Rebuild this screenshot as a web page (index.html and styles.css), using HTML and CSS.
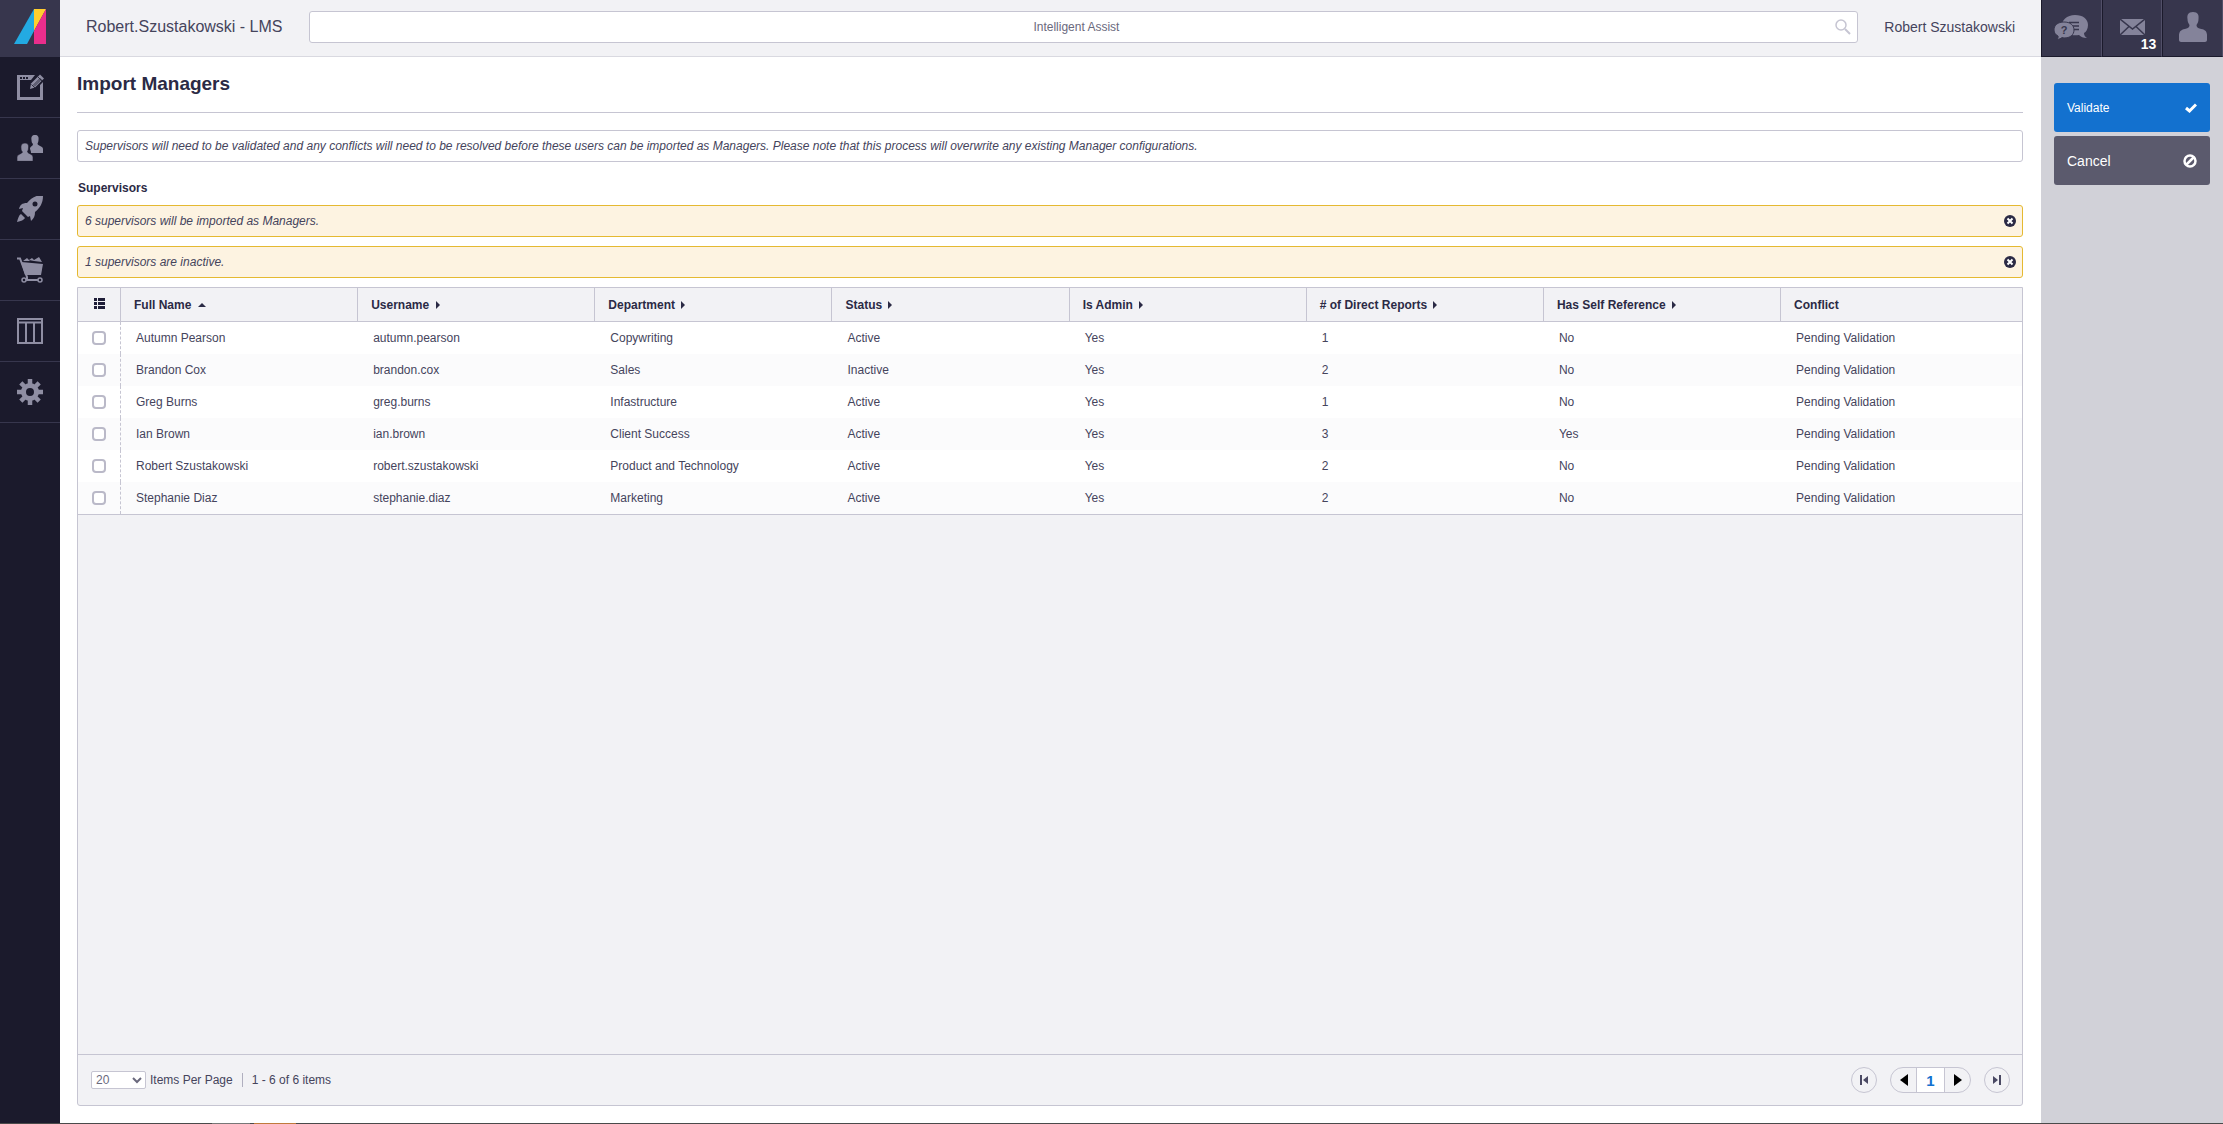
FILE: index.html
```html
<!DOCTYPE html>
<html lang="en">
<head>
    <meta charset="UTF-8">
    <meta name="viewport" content="width=device-width, initial-scale=1.0">
    <title>Import Managers</title>
    <link rel="stylesheet" href="styles.css">
</head>
<body>
    <div class="app">
        <!-- Left menu -->
        <nav class="sidebar" aria-label="Main menu">
            <a class="logo" href="#" aria-label="Home">
                <svg width="32" height="36" viewBox="0 0 32 36">
                    <path fill="#23aae2" d="M0 35L20 0v22l-7 13z"/>
                    <path fill="#ffcf2e" d="M20 0h12L20 22z"/>
                    <path fill="#ea2e8c" d="M32 0v35H20V22z"/>
                </svg>
            </a>
            <a class="menu-item" href="#" aria-label="Content">
                <svg width="28" height="26" viewBox="0 0 28 26">
                    <path fill="currentColor" fill-rule="evenodd" d="M1 1h18l-4 5H4v17h20V11l3-3v18H1zM4 3v2h2V3zM7 3v2h2V3zM10 3v2h2V3z"/>
                    <path fill="currentColor" d="M14 15l1-5.500 9-9 4 4-9 9z"/>
                    <path fill="none" stroke="#1b1a2c" stroke-width=".8" d="M15.500 10.500l3.500 3.500M17 11.500l7.500-7.500M18 12.500l7.500-7.500M22 3l4 4"/>
                </svg>
            </a>
            <a class="menu-item" href="#" aria-label="Users">
                <svg width="26" height="26" viewBox="0 0 26 26">
                    <path fill="currentColor" d="M18 0c3 0 4 2 3.500 5 0 2-1 3-1 4 1 2 5.500 2 5.500 5v4H14c0-3-1-3-1-5 1-2 3-2 3-4-1-1-1.500-2-1.500-4C14 2 15 0 18 0z"/>
                    <path fill="currentColor" stroke="#1b1a2c" stroke-width=".6" d="M8 8c3 0 4 2 3.500 5 0 2-1 3-1 4 1 2 5.500 2 5.500 5v4.300H0V22c0-3 5-3 5.500-5-1-1-1.500-2-1.500-4C3.500 10 5 8 8 8z"/>
                </svg>
            </a>
            <a class="menu-item" href="#" aria-label="Launch">
                <svg width="26" height="26" viewBox="0 0 26 26">
                    <path fill="currentColor" fill-rule="evenodd" d="M26 0c0 7-3 12-8 16 0 4-1 6-4 9l-1-5-2 1-6-6 1-3-4 1c1-4 3-6 8-6 4-5 9-8 16-8zM18 5.500a2.500 2.500 0 1 0 0 5 2.500 2.500 0 0 0 0-5z"/>
                    <path fill="currentColor" d="M4 18l4 4c-1 2-4 3-8 4 1-4 2-7 4-8z"/>
                </svg>
            </a>
            <a class="menu-item" href="#" aria-label="Store">
                <svg width="26" height="26" viewBox="0 0 26 26">
                    <path fill="currentColor" d="M4 5l22 2-2 11H8z"/>
                    <path fill="currentColor" d="M6 4l4-3 3 3zM12 3l3-2 2 2 5-3 3 5-8-1z"/>
                    <path fill="none" stroke="currentColor" stroke-width="2" d="M0 1.500h3l6 16 1 2.500v3M9 23h12"/>
                    <circle cx="7" cy="23" r="2" fill="#1b1a2c" stroke="currentColor" stroke-width="1.500"/>
                    <circle cx="23" cy="23" r="2" fill="#1b1a2c" stroke="currentColor" stroke-width="1.500"/>
                </svg>
            </a>
            <a class="menu-item" href="#" aria-label="Reports">
                <svg width="26" height="26" viewBox="0 0 26 26">
                    <path fill="none" stroke="currentColor" stroke-width="2" d="M1 1h24v24H1zM1 4.500h24M9 5v20M17 5v20"/>
                </svg>
            </a>
            <a class="menu-item" href="#" aria-label="Settings">
                <svg width="26" height="26" viewBox="0 0 26 26">
                    <circle cx="13" cy="13" r="6.500" fill="none" stroke="currentColor" stroke-width="5"/>
                    <path stroke="currentColor" stroke-width="4.500" d="M13 0v6M13 20v6M0 13h6M20 13h6M3.800 3.800L8 8M18 18l4.200 4.200M3.800 22.200L8 18M18 8l4.200-4.200"/>
                </svg>
            </a>
        </nav>

        <div class="center">
            <header class="topbar">
                <span class="portal-name">Robert.Szustakowski - LMS</span>
                <form class="search">
                    <input type="text" placeholder="Intelligent Assist" aria-label="Intelligent Assist">
                    <svg class="search-icon" width="16" height="16" viewBox="0 0 16 16">
                        <circle cx="6" cy="6" r="5" fill="none" stroke="currentColor" stroke-width="1.500"/>
                        <path stroke="currentColor" stroke-width="2" d="M10 10l5 5"/>
                    </svg>
                </form>
                <span class="user-name">Robert Szustakowski</span>
            </header>

            <main class="content">
                <h1>Import Managers</h1>
                <p class="message">Supervisors will need to be validated and any conflicts will need to be resolved before these users can be imported as Managers. Please note that this process will overwrite any existing Manager configurations.</p>

                <h2>Supervisors</h2>
                <div class="message warning">
                    <span>6 supervisors will be imported as Managers.</span>
                    <button type="button" class="close" aria-label="Close">
                        <svg width="12" height="12" viewBox="0 0 12 12"><circle cx="6" cy="6" r="6" fill="#2b2a45"/><path stroke="#fff" stroke-width="2" d="M3.500 3.500l5 5M8.500 3.500l-5 5"/></svg>
                    </button>
                </div>
                <div class="message warning">
                    <span>1 supervisors are inactive.</span>
                    <button type="button" class="close" aria-label="Close">
                        <svg width="12" height="12" viewBox="0 0 12 12"><circle cx="6" cy="6" r="6" fill="#2b2a45"/><path stroke="#fff" stroke-width="2" d="M3.500 3.500l5 5M8.500 3.500l-5 5"/></svg>
                    </button>
                </div>

                <section class="grid">
                    <table>
                        <thead>
                            <tr>
                                <th class="check-col">
                                    <svg width="11" height="11" viewBox="0 0 11 11"><path fill="#1f1e38" d="M0 0h3v3H0zM4 0h7v3H4zM0 4h3v3H0zM4 4h7v3H4zM0 8h3v3H0zM4 8h7v3H4z"/></svg>
                                </th>
                                <th>Full Name <i class="sort up"></i></th>
                                <th>Username <i class="sort"></i></th>
                                <th>Department <i class="sort"></i></th>
                                <th>Status <i class="sort"></i></th>
                                <th>Is Admin <i class="sort"></i></th>
                                <th># of Direct Reports <i class="sort"></i></th>
                                <th>Has Self Reference <i class="sort"></i></th>
                                <th class="last-col">Conflict</th>
                            </tr>
                        </thead>
                        <tbody>
                            <tr>
                                <td class="check-col"><input type="checkbox" aria-label="Select Autumn Pearson"></td>
                                <td>Autumn Pearson</td><td>autumn.pearson</td><td>Copywriting</td><td>Active</td><td>Yes</td><td>1</td><td>No</td><td>Pending Validation</td>
                            </tr>
                            <tr>
                                <td class="check-col"><input type="checkbox" aria-label="Select Brandon Cox"></td>
                                <td>Brandon Cox</td><td>brandon.cox</td><td>Sales</td><td>Inactive</td><td>Yes</td><td>2</td><td>No</td><td>Pending Validation</td>
                            </tr>
                            <tr>
                                <td class="check-col"><input type="checkbox" aria-label="Select Greg Burns"></td>
                                <td>Greg Burns</td><td>greg.burns</td><td>Infastructure</td><td>Active</td><td>Yes</td><td>1</td><td>No</td><td>Pending Validation</td>
                            </tr>
                            <tr>
                                <td class="check-col"><input type="checkbox" aria-label="Select Ian Brown"></td>
                                <td>Ian Brown</td><td>ian.brown</td><td>Client Success</td><td>Active</td><td>Yes</td><td>3</td><td>Yes</td><td>Pending Validation</td>
                            </tr>
                            <tr>
                                <td class="check-col"><input type="checkbox" aria-label="Select Robert Szustakowski"></td>
                                <td>Robert Szustakowski</td><td>robert.szustakowski</td><td>Product and Technology</td><td>Active</td><td>Yes</td><td>2</td><td>No</td><td>Pending Validation</td>
                            </tr>
                            <tr>
                                <td class="check-col"><input type="checkbox" aria-label="Select Stephanie Diaz"></td>
                                <td>Stephanie Diaz</td><td>stephanie.diaz</td><td>Marketing</td><td>Active</td><td>Yes</td><td>2</td><td>No</td><td>Pending Validation</td>
                            </tr>
                        </tbody>
                    </table>

                    <footer class="grid-footer">
                        <div class="page-size">
                            <select id="page-size">
                                <option>20</option>
                                <option>50</option>
                                <option>100</option>
                            </select>
                            <label for="page-size">Items Per Page</label>
                            <span class="item-count">1 - 6 of 6 items</span>
                        </div>
                        <div class="pager">
                            <button type="button" class="round" aria-label="First page">
                                <svg width="8" height="10" viewBox="0 0 8 10"><path fill="#4a4963" d="M0 0h2v10H0zM8 1v8L3 5z"/></svg>
                            </button>
                            <div class="page-group">
                                <button type="button" aria-label="Previous page">
                                    <svg width="8" height="12" viewBox="0 0 8 12"><path d="M8 0v12L0 6z"/></svg>
                                </button>
                                <button type="button" class="current">1</button>
                                <button type="button" aria-label="Next page">
                                    <svg width="8" height="12" viewBox="0 0 8 12"><path d="M0 0v12l8-6z"/></svg>
                                </button>
                            </div>
                            <button type="button" class="round" aria-label="Last page">
                                <svg width="8" height="10" viewBox="0 0 8 10"><path fill="#4a4963" d="M6 0h2v10H6zM0 1v8l5-4z"/></svg>
                            </button>
                        </div>
                    </footer>
                </section>
            </main>
        </div>

        <!-- Right column -->
        <aside class="right">
            <div class="tiles">
                <a class="tile" href="#" aria-label="Help">
                    <svg width="34" height="26" viewBox="0 0 34 26">
                        <path fill="#84839a" d="M21 1c8 0 13 4 13 10 0 4-2 7-4 8 0 2 1 4 3 5-4 0-6-1-8-3-7 1-16-1-17-8C7 6 13 1 21 1z"/>
                        <path stroke="#37364d" stroke-width="1.500" d="M15 8.500h10M17 12h8M20 15.500h5"/>
                        <path fill="#84839a" stroke="#37364d" d="M10 8c6 0 10 3 10 8s-4 8-10 8l-2-.5c-1 1-3 2-5 1.500 1-1 1.500-2 1-3-2-1-4-3-4-6 0-5 4-8 10-8z"/>
                        <text x="10" y="20" text-anchor="middle" class="question">?</text>
                    </svg>
                </a>
                <a class="tile" href="#" aria-label="Messages">
                    <svg width="25" height="16" viewBox="0 0 25 16">
                        <path fill="#84839a" d="M0 0h25v16H0z"/>
                        <path fill="none" stroke="#37364d" stroke-width="1.500" d="M0 0l12.500 10L25 0M0 16l9-8.500M25 16l-9-8.500"/>
                    </svg>
                    <span class="badge">13</span>
                </a>
                <a class="tile" href="#" aria-label="Profile">
                    <svg width="28" height="30" viewBox="0 0 28 30">
                        <path fill="#84839a" d="M14 0c5 0 6 3 5.500 7 0 3-1 4-2 6 0 2 1 3 3 3.500 5 1 7 2 7.500 6V28c0 1-1 2-2 2H2c-1 0-2-1-2-2v-5.500c.5-4 3-5 7.500-6 2-.5 3-1.500 3-3.500-1-2-2-3-2-6C8 3 9 0 14 0z"/>
                    </svg>
                </a>
            </div>
            <div class="actions">
                <button type="button" class="action validate">
                    Validate
                    <svg width="12" height="10" viewBox="0 0 12 10"><path fill="none" stroke="#fff" stroke-width="3" d="M1 5l3.500 3L11 1.500"/></svg>
                </button>
                <button type="button" class="action cancel">
                    Cancel
                    <svg width="14" height="14" viewBox="0 0 14 14"><circle cx="7" cy="7" r="5.500" fill="none" stroke="#fff" stroke-width="2.500"/><path stroke="#fff" stroke-width="2.500" d="M3.500 10.500l7-7"/></svg>
                </button>
            </div>
        </aside>
    </div>
    <div class="bottom-line"></div>
</body>
</html>
```

FILE: styles.css
```css
* {
    box-sizing: border-box;
    margin: 0;
    padding: 0;
    font-family: "Liberation Sans", Arial, sans-serif;
}

body {
    display: flex;
    flex-direction: column;
    min-height: 100vh;
    font-size: 12px;
    color: #45445c;
    background-color: #fff;
}

.app {
    display: flex;
    flex: 1;
}

/* left menu */
.sidebar {
    width: 60px;
    background-color: #1b1a2c;
}

.logo,
.menu-item {
    display: flex;
    justify-content: center;
    align-items: center;
}

.logo {
    height: 57px;
    padding-bottom: 3px;
    background-color: #37364d;
}

.menu-item {
    height: 61px;
    border-bottom: 1px solid #37364d;
    color: #8f8ea3;
}

/* center */
.center {
    display: flex;
    flex-direction: column;
    flex: 1;
}

.topbar {
    display: flex;
    align-items: center;
    gap: 26px;
    height: 57px;
    padding: 0 26px 3px;
    background-color: #f2f2f5;
    border-bottom: 1px solid #d9d9e0;
}

.portal-name {
    font-size: 16px;
}

.user-name {
    font-size: 14px;
}

.search {
    position: relative;
    flex: 1;
}

.search input {
    width: 100%;
    height: 32px;
    padding: 0 14px 0 0;
    border: 1px solid #c6c5d2;
    border-radius: 3px;
    font-size: 12px;
    text-align: center;
    background-color: #fff;
}

.search input::placeholder {
    color: #6a697d;
}

.search-icon {
    position: absolute;
    top: 8px;
    right: 7px;
    color: #c6c5d2;
}

.content {
    display: flex;
    flex-direction: column;
    flex: 1;
    padding: 0 18px 17px 17px;
}

h1 {
    margin-bottom: 17px;
    padding: 16px 0 17px;
    border-bottom: 1px solid #c6c5d2;
    font-size: 19px;
    line-height: 22px;
    color: #2b2a45;
}

h2 {
    margin: 16px 0 7px;
    padding-left: 1px;
    font-size: 12px;
    line-height: 20px;
    color: #2b2a45;
}

.message {
    display: flex;
    justify-content: space-between;
    align-items: center;
    min-height: 32px;
    padding: 0 6px 0 7px;
    border: 1px solid #c6c5d2;
    border-radius: 3px;
    font-size: 12px;
    font-style: italic;
}

.warning {
    margin-bottom: 9px;
    border-color: #e5b931;
    background-color: #fdf3e1;
}

.close {
    display: flex;
    border: none;
    background: none;
    cursor: pointer;
}

/* grid */
.grid {
    display: flex;
    flex-direction: column;
    flex: 1;
    border: 1px solid #c6c5d2;
    border-radius: 0 0 3px 3px;
    background-color: #f2f2f5;
}

table {
    width: 100%;
    table-layout: fixed;
    border-collapse: separate;
    border-spacing: 0;
    border-bottom: 1px solid #c6c5d2;
}

th {
    width: 12.2%;
    height: 34px;
    padding-left: 13px;
    border-right: 1px solid #c6c5d2;
    border-bottom: 1px solid #c6c5d2;
    text-align: left;
    color: #2b2a45;
}

th.last-col {
    width: auto;
    border-right: none;
}

td {
    height: 32px;
    padding-left: 15px;
    background-color: #fff;
}

tr:nth-child(even) td {
    background-color: #fbfbfc;
}

th.check-col {
    width: 43px;
    padding: 0;
    text-align: center;
}

td.check-col {
    padding: 0;
    border-right: 1px dashed #c6c5d2;
    text-align: center;
}

td input {
    appearance: none;
    width: 14px;
    height: 14px;
    border: 2px solid #bab9c8;
    border-radius: 4px;
    background-color: #fff;
    vertical-align: middle;
}

.sort {
    display: inline-block;
    margin-left: 3px;
    border-top: 4px solid transparent;
    border-bottom: 4px solid transparent;
    border-left: 4px solid #2b2a45;
}

.sort.up {
    margin-bottom: 2px;
    border-top: none;
    border-right: 4px solid transparent;
    border-bottom: 4px solid #2b2a45;
    border-left: 4px solid transparent;
}

.grid-footer {
    display: flex;
    justify-content: space-between;
    align-items: center;
    height: 51px;
    margin-top: auto;
    padding: 0 12px 0 13px;
    border-top: 1px solid #c6c5d2;
}

.page-size {
    display: flex;
    align-items: center;
}

.page-size select {
    width: 55px;
    height: 18px;
    margin-right: 4px;
    border: 1px solid #c6c5d2;
    border-radius: 2px;
    font-size: 12px;
    color: #6a697d;
    background-color: #fff;
}

.item-count {
    margin-left: 9px;
    padding-left: 9px;
    border-left: 1px solid #b0afbf;
}

.pager {
    display: flex;
    gap: 13px;
}

.pager button {
    display: flex;
    justify-content: center;
    align-items: center;
    width: 25px;
    border: none;
    background: none;
    cursor: pointer;
}

.pager .round {
    width: 26px;
    height: 26px;
    border: 1px solid #c6c5d2;
    border-radius: 50%;
}

.page-group {
    display: flex;
    height: 26px;
    border: 1px solid #c6c5d2;
    border-radius: 13px;
    overflow: hidden;
}

.pager .current {
    width: 29px;
    border-left: 1px solid #c6c5d2;
    border-right: 1px solid #c6c5d2;
    font-size: 15px;
    font-weight: bold;
    color: #1371cf;
    background-color: #fff;
}

/* right column */
.right {
    width: 182px;
    background-color: #d1d1d8;
}

.tiles {
    display: flex;
    height: 57px;
    background-color: #37364d;
}

.tile {
    position: relative;
    display: flex;
    flex: 1;
    justify-content: center;
    align-items: center;
    padding-bottom: 3px;
    border-left: 1px solid #1b1a2c;
    border-right: 1px solid #514f68;
    border-bottom: 1px solid #1b1a2c;
    text-decoration: none;
}

.badge {
    position: absolute;
    right: 5px;
    bottom: 4px;
    font-size: 14px;
    font-weight: bold;
    color: #fff;
}

.question {
    font-size: 11px;
    font-weight: bold;
    fill: #37364d;
}

.actions {
    display: flex;
    flex-direction: column;
    gap: 4px;
    padding: 26px 13px;
}

.action {
    display: flex;
    justify-content: space-between;
    align-items: center;
    height: 49px;
    padding: 0 13px;
    border: none;
    border-radius: 3px;
    color: #fff;
    cursor: pointer;
}

.validate {
    font-size: 12px;
    background-color: #1371cf;
}

.cancel {
    font-size: 14px;
    background-color: #5b5a6d;
}

.bottom-line {
    height: 1px;
    background: linear-gradient(to right, #4a4a4a 212px, #777 212px, #777 250px, #4a4a4a 250px, #4a4a4a 254px, #c07a3c 254px, #c07a3c 296px, #4a4a4a 296px);
}
```
